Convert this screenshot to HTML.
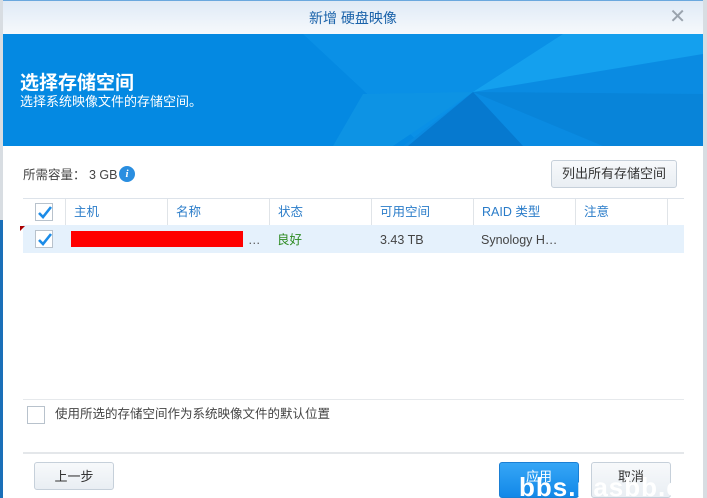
<!DOCTYPE html>
<html><head><meta charset="utf-8"><style>
*{margin:0;padding:0;box-sizing:border-box}
html,body{width:707px;height:498px;overflow:hidden}
body{background:#d8dde2;font-family:"Liberation Sans","Noto Sans CJK SC",sans-serif;position:relative}
.dlg{position:absolute;left:3px;top:0;width:700px;height:498px;background:#fff;overflow:hidden}
.title{height:34px;background:linear-gradient(#dfeaf6,#f6f9fc);text-align:center;line-height:34px;color:#1b63aa;font-size:14px;border-top:1px solid #6aa8de}
.x{position:absolute;right:17px;top:7px;color:#9aa3ad;font-size:20px;line-height:20px}
.banner{position:absolute;top:34px;left:0;width:700px;height:112px;background:#0489e2;overflow:hidden}
.banner h1{position:absolute;left:17px;top:37px;font-size:19px;line-height:26px;color:#fff;font-weight:bold}
.banner p{position:absolute;left:17px;top:59px;font-size:13px;line-height:18px;color:#fff}
.t{position:absolute;font-size:12.5px;line-height:16px;color:#444;white-space:nowrap}
.btn{position:absolute;border:1px solid #c6d0da;border-radius:3px;background:linear-gradient(#f7f9fb,#e9eef3);font-size:13px;color:#333;text-align:center}
.cb{position:absolute;width:18px;height:18px;border:1px solid #b8c2cc;background:#fff}
.cb svg{position:absolute;left:1px;top:1px}
.hd{position:absolute;top:199px;height:26px;line-height:26px;font-size:12.5px;color:#2a7cc9;border-left:1px solid #e0e4e8;padding-left:8px}
</style></head><body>
<div style="position:absolute;left:0;top:220px;width:3px;height:278px;background:#1a6fb8"></div>
<div class="dlg">
<div class="title">新增 硬盘映像</div>
<div class="x">✕</div>
<div class="banner">
<svg width="700" height="112" style="position:absolute;left:0;top:0">
<polygon points="300,0 700,0 700,112 420,112" fill="#0a90e6"/>
<polygon points="470,58 700,0 700,112 400,112" fill="#0a8be2"/>
<polygon points="470,58 560,0 700,0 700,20" fill="#14a0ee"/>
<polygon points="470,58 405,112 520,112" fill="#0679cf"/>
<polygon points="470,58 600,112 700,112 700,60" fill="#0884d9"/>
<polygon points="360,60 470,58 390,112 330,112" fill="#0d93e4"/>
</svg>
<h1>选择存储空间</h1><p>选择系统映像文件的存储空间。</p>
</div>
<div class="t" style="left:20px;top:167px">所需容量： 3 GB</div>
<div style="position:absolute;left:116px;top:166px;width:16px;height:16px;border-radius:50%;background:#2a8ee0;color:#fff;font-size:11px;font-style:italic;font-weight:bold;text-align:center;line-height:16px;font-family:'Liberation Serif',serif">i</div>
<div class="btn" style="left:548px;top:160px;width:126px;height:28px;line-height:26px">列出所有存储空间</div>
<div style="position:absolute;left:20px;top:198px;width:661px;height:1px;background:#dde3ea"></div>
<div style="position:absolute;left:20px;top:225px;width:661px;height:28px;background:#e5f1fc"></div>
<div class="cb" style="left:32px;top:203px"><svg width="16" height="16"><path d="M2 8 L6 12 L14 2" fill="none" stroke="#1c8ce8" stroke-width="2.6"/></svg></div>
<div class="hd" style="left:62px">主机</div>
<div class="hd" style="left:164px">名称</div>
<div class="hd" style="left:266px">状态</div>
<div class="hd" style="left:368px">可用空间</div>
<div class="hd" style="left:470px">RAID 类型</div>
<div class="hd" style="left:572px">注意</div>
<div class="hd" style="left:664px;width:1px;padding:0"></div>
<div style="position:absolute;left:17px;top:226px;width:0;height:0;border-top:5px solid #a00;border-right:5px solid transparent"></div>
<div class="cb" style="left:32px;top:230px"><svg width="16" height="16"><path d="M2 8 L6 12 L14 2" fill="none" stroke="#1c8ce8" stroke-width="2.6"/></svg></div>
<div style="position:absolute;left:68px;top:231px;width:172px;height:16px;background:#f00"></div>
<div class="t" style="left:245px;top:232px;color:#555">…</div>
<div class="t" style="left:274px;top:232px;color:#2e8b22">良好</div>
<div class="t" style="left:377px;top:232px">3.43 TB</div>
<div class="t" style="left:478px;top:232px">Synology H…</div>
<div style="position:absolute;left:20px;top:399px;width:661px;height:1px;background:#e6e9ec"></div>
<div class="cb" style="left:24px;top:406px"></div>
<div class="t" style="left:52px;top:406px">使用所选的存储空间作为系统映像文件的默认位置</div>
<div style="position:absolute;left:20px;top:452px;width:661px;height:2px;background:#e4e7ea"></div>
<div class="btn" style="left:31px;top:462px;width:80px;height:28px;line-height:28px">上一步</div>
<div class="btn" style="left:496px;top:462px;width:80px;height:36px;line-height:28px;background:linear-gradient(#36a6f6,#1288e8);border-color:#1a7fd4;color:#fff">应用</div>
<div class="btn" style="left:588px;top:462px;width:80px;height:36px;line-height:28px">取消</div>
<div style="position:absolute;left:516px;top:472px;font-size:26px;line-height:30px;font-weight:bold;color:#fff;letter-spacing:1px">bbs.nasbb.co</div>
</div>
</body></html>
